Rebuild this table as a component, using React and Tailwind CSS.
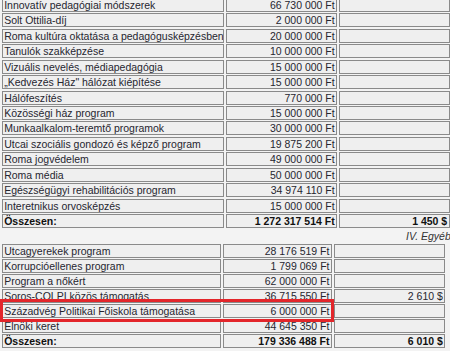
const topRows = [
  ['Innovatív pedagógiai módszerek', '66 730 000 Ft', ''],
  ['Solt Ottilia-díj', '2 000 000 Ft', ''],
  ['Roma kultúra oktatása a pedagógusképzésben', '20 000 000 Ft', ''],
  ['Tanulók szakképzése', '10 000 000 Ft', ''],
  ['Vizuális nevelés, médiapedagógia', '15 000 000 Ft', ''],
  ['„Kedvezés Ház" hálózat kiépítése', '15 000 000 Ft', ''],
  ['Hálófeszítés', '770 000 Ft', ''],
  ['Közösségi ház program', '15 000 000 Ft', ''],
  ['Munkaalkalom-teremtő programok', '30 000 000 Ft', ''],
  ['Utcai szociális gondozó és képző program', '19 875 200 Ft', ''],
  ['Roma jogvédelem', '49 000 000 Ft', ''],
  ['Roma média', '50 000 000 Ft', ''],
  ['Egészségügyi rehabilitációs program', '34 974 110 Ft', ''],
  ['Interetnikus orvosképzés', '15 000 000 Ft', ''],
];

const bottomRows = [
  ['Utcagyerekek program', '28 176 519 Ft', ''],
  ['Korrupcióellenes program', '1 799 069 Ft', ''],
  ['Program a nőkért', '62 000 000 Ft', ''],
  ['Soros-COLPI közös támogatás', '36 715 550 Ft', '2 610 $'],
  ['Századvég Politikai Főiskola támogatása', '6 000 000 Ft', ''],
  ['Elnöki keret', '44 645 350 Ft', ''],
];

function Cell({ children, right, bold }) {
  return (
    <div
      className={`h-[14px] border border-[#8a8a8a] bg-[#efefef] px-[1.5px] text-[10.5px] leading-[12px] whitespace-nowrap overflow-hidden ${
        right ? 'text-right' : 'text-left'
      } ${bold ? 'font-bold text-[#111]' : ''}`}
    >
      {children}
    </div>
  );
}

function Table({ rows, total, cols, gapY }) {
  return (
    <div className={`flex flex-col ${gapY}`}>
      {rows.map((r) => (
        <div key={r[0]} className={`grid ${cols}`}>
          <Cell>{r[0]}</Cell>
          <Cell right>{r[1]}</Cell>
          <Cell right>{r[2]}</Cell>
        </div>
      ))}
      <div className={`grid ${cols}`}>
        <Cell bold>Összesen:</Cell>
        <Cell right bold>{total[0]}</Cell>
        <Cell right bold>{total[1]}</Cell>
      </div>
    </div>
  );
}

export default function App() {
  return (
    <div
      className="relative w-[450px] h-[351px] overflow-hidden bg-[#f3f3f3] text-[#262630]"
      style={{ fontFamily: '"Liberation Sans", Arial, sans-serif' }}
    >
      <div className="mt-[-2.2px] pl-[1.7px]">
        <Table
          rows={topRows}
          total={['1 272 317 514 Ft', '1 450 $']}
          cols="grid-cols-[222.5px_111.5px_111px] gap-x-[1.5px]"
          gapY="gap-y-[1.46px]"
        />
      </div>
      <div className="h-[16px] pl-[406px] pt-[2px] text-[10.5px] leading-[12px] italic whitespace-nowrap text-[#333]">
        IV. Egyéb
      </div>
      <div className="pl-[1.7px]">
        <Table
          rows={bottomRows}
          total={['179 336 488 Ft', '6 010 $']}
          cols="grid-cols-[219.3px_109.3px_111.7px] gap-x-[1.7px]"
          gapY="gap-y-[1px]"
        />
      </div>
      <div className="absolute left-0 top-[299px] w-[334px] h-[23px] border-[3px] border-[#e3262b]" />
    </div>
  );
}
